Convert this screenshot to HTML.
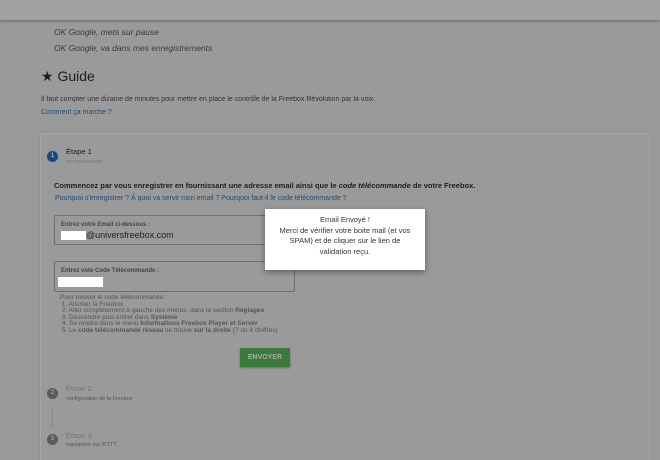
<!DOCTYPE html>
<html style="overflow:hidden;height:460px"><head><meta charset="utf-8"><style>
body{margin:0;width:660px;height:460px;overflow:hidden;background:#9a9a9a;font-family:"Liberation Sans",sans-serif;position:relative;color:#1e1e1e}
.top{position:absolute;left:0;top:0;width:660px;height:20px;background:#a1a1a1;box-shadow:0 1px 3px rgba(0,0,0,.35)}
.a{position:absolute;white-space:nowrap}
.it{font-style:italic;font-size:8.5px;color:#3a3a3a}
.card{position:absolute;left:40px;top:133px;width:608px;height:330px;border:1px solid #a6a6a6;border-bottom:none;box-shadow:0 0 2px rgba(0,0,0,.15)}
.circ{position:absolute;width:11px;height:11px;border-radius:50%;color:#bbb;font-size:6px;text-align:center;line-height:11px}
.box{position:absolute;border:1px solid #6e6e6e;border-radius:2px}
.lnk{color:#234c75;font-size:7px}
.sm{font-size:6.5px;color:#555;line-height:6.6px}
</style></head><body>
<div class="top"></div>
<div class="a it" style="left:54px;top:27px">OK Google, mets sur pause</div>
<div class="a it" style="left:54px;top:43px">OK Google, va dans mes enregistrements</div>
<div class="a" style="left:41px;top:68px;font-size:14px">★ Guide</div>
<div class="a" style="left:41px;top:96px;font-size:7px;color:#333">Il faut compter une dizaine de minutes pour mettre en place le contrôle de la Freebox Révolution par la voix.</div>
<div class="a lnk" style="left:41px;top:109px">Comment ça marche ?</div>
<div class="card"></div>
<div class="circ" style="left:47px;top:151px;background:#1d4a7e;color:#ddd">1</div>
<div class="a" style="left:66px;top:147px;font-size:7.5px">Étape 1</div>
<div class="a" style="left:66px;top:159px;font-size:5.5px;color:#777">enregistrement</div>
<div class="a" style="left:54px;top:181px;font-size:7.5px;font-weight:bold">Commencez par vous enregistrer en fournissant une adresse email ainsi que le <i>code télécommande</i> de votre Freebox.</div>
<div class="a lnk" style="left:55px;top:195px">Pourquoi s'enregistrer ? À quoi va servir mon email ? Pourquoi faut-il le code télécommande ?</div>
<div class="box" style="left:54px;top:215px;width:239px;height:28px"></div>
<div class="a" style="left:61px;top:222px;font-size:6px;color:#444;font-weight:bold">Entrez votre Email ci-dessous :</div>
<div class="a" style="left:61px;top:231px;width:25px;height:9px;background:#fff"></div>
<div class="a" style="left:86px;top:230px;font-size:9px;color:#222">@universfreebox.com</div>
<div class="box" style="left:54px;top:261px;width:239px;height:29px"></div>
<div class="a" style="left:61px;top:268px;font-size:6px;color:#444;font-weight:bold">Entrez vote Code Télécommande :</div>
<div class="a" style="left:58px;top:277px;width:45px;height:10px;background:#fff"></div>
<div class="a sm" style="left:60px;top:295px">Pour trouver le code télécommande :<br>&nbsp;1. Allumer la Freebox<br>&nbsp;2. Aller complètement à gauche des menus, dans la section <b>Réglages</b><br>&nbsp;3. Descendre puis entrer dans <b>Système</b><br>&nbsp;4. Se rendre dans le menu <b>Informations Freebox Player et Server</b><br>&nbsp;5. Le <b>code télécommande réseau</b> se trouve <b>sur la droite</b> (7 ou 8 chiffres)</div>
<div class="a" style="left:240px;top:348px;width:50px;height:19px;background:#3a7a3a;box-shadow:0 1px 2px rgba(0,0,0,.3);color:#aaa;font-size:7px;font-weight:bold;text-align:center;line-height:19px">ENVOYER</div>
<div class="circ" style="left:47px;top:388px;background:#5c5c5c">2</div>
<div class="a" style="left:66px;top:384px;font-size:7.5px;color:#777">Étape 2</div>
<div class="a" style="left:66px;top:396px;font-size:5.5px;color:#555">configuration de la Freebox</div>
<div class="a" style="left:52px;top:408px;width:1px;height:20px;background:#888"></div>
<div class="circ" style="left:47px;top:434px;background:#5c5c5c">3</div>
<div class="a" style="left:66px;top:431px;font-size:7.5px;color:#777">Étape 3</div>
<div class="a" style="left:66px;top:442px;font-size:5.5px;color:#555">Inscription sur IFTTT</div>
<div class="a" style="left:265px;top:209px;width:160px;height:61px;background:#fff;box-shadow:0 2px 6px rgba(0,0,0,.4);text-align:center;font-size:7.5px;line-height:10.5px;color:#333;white-space:normal;padding:6px 8px 0;box-sizing:border-box">Email Envoyé !<br>Merci de vérifier votre boite mail (et vos SPAM) et de cliquer sur le lien de validation reçu.</div>
</body></html>
